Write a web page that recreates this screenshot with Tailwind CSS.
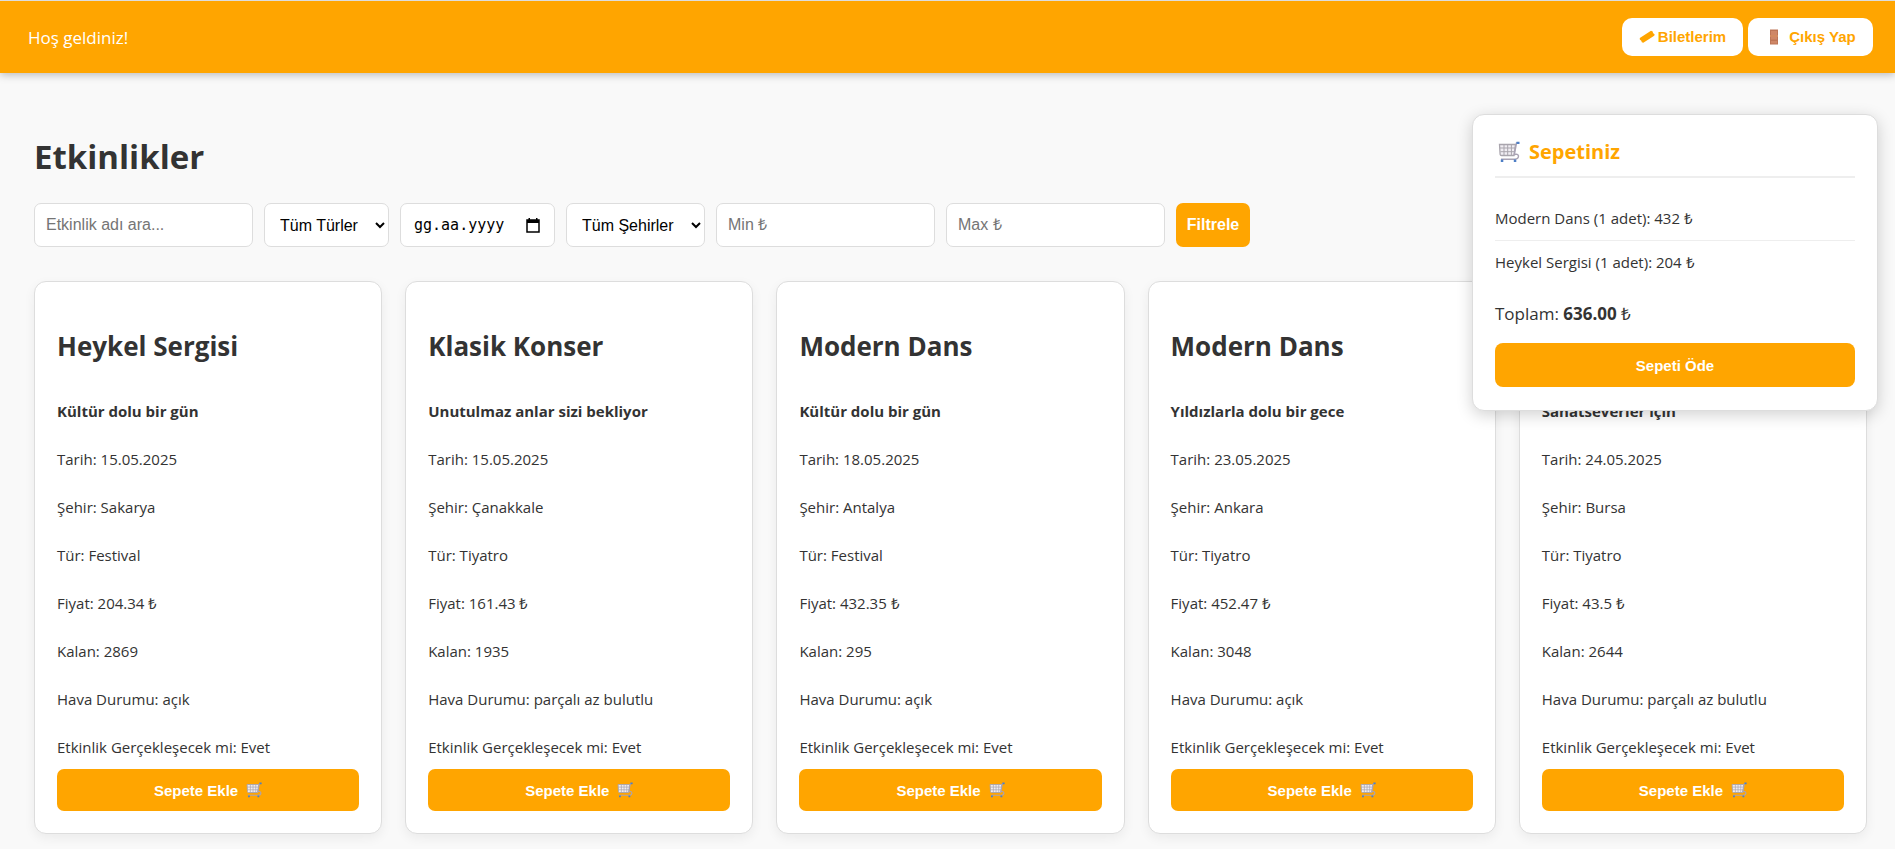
<!DOCTYPE html>
<html lang="tr">
<head>
<meta charset="utf-8">
<title>Etkinlikler</title>
<script src="https://cdn.jsdelivr.net/npm/@tailwindcss/browser@4"></script>
</head>
<body class="min-h-screen bg-[#f9f9f9] font-['Segoe_UI','Open_Sans',sans-serif] text-[15px] leading-[25px] text-[#333]">

<svg class="hidden" aria-hidden="true">
  <symbol id="cart" viewBox="0 0 22 22">
    <path d="M1.500 3.500H17.500L16 14.500H3.500Q2.300 14.500 2.100 13.300Z" fill="#f1eef3" stroke="#a9a5ad" stroke-width="1.300"/>
    <path d="M2 7H17M2.500 10.700H16.500M6 3.500V14.500M9.700 3.500V14.500M13.400 3.500V14.500" stroke="#a9a5ad" stroke-width="1" fill="none"/>
    <path d="M20.500 2H18.500L16.300 13.500Q20 12.500 20.500 15Q20.500 18 17 18.300H3" fill="none" stroke="#aaa3b4" stroke-width="1.400"/>
    <path d="M18.500 .8H21.500V3H18.500ZM2.800 18.500H5.300V21H2.800ZM15.800 18.500H18.300V21H15.800Z" fill="#4d7ec5"/>
  </symbol>
</svg>

<header class="flex items-center justify-between border-t border-[#ddd] bg-[#ffa500] py-[17px] pr-[22px] pl-7 shadow-[0_2px_8px_rgba(0,0,0,0.25)]">
  <span class="text-[17px] text-white">Hoş geldiniz!</span>
  <nav class="flex gap-[5px] font-['Liberation_Sans',Arial,sans-serif] text-[15px] leading-[18px] font-bold text-[#ffa500]">
    <button type="button" class="flex h-[38px] w-[121px] items-center justify-center gap-[3px] rounded-[10px] bg-white">
      <svg class="h-4 w-4" viewBox="0 0 16 16" aria-hidden="true"><path d="M.8 9L12 1.800L13.700 2.500L14 4L15.700 5.500L15.200 6.800L4.300 13.800L2.800 13.200L2.300 11.800L.8 10.500Z" fill="#ffa500"/></svg>
      Biletlerim
    </button>
    <button type="button" class="flex h-[38px] w-[125px] items-center justify-center gap-2 rounded-[10px] bg-white">
      <svg class="h-4 w-4" viewBox="0 0 16 16" aria-hidden="true"><path d="M5 .5H13V15.500H5Z" fill="#bd7556"/><path d="M6 2H12V6H6ZM6 8H12V10.500H6ZM6 12H12V14.500H6Z" fill="#cf8767"/><path d="M5 7H13" stroke="#e9a06a"/></svg>
      Çıkış Yap
    </button>
  </nav>
</header>

<main class="pt-[60px] pr-7 pb-[13px] pl-[34px]">
  <h1 class="mb-[22px] text-[33px] leading-[48px] font-bold">Etkinlikler</h1>

  <form class="mb-[34px] flex flex-wrap gap-[11px] font-['Liberation_Sans',Arial,sans-serif] text-base leading-5 text-black">
    <input type="text" aria-label="Etkinlik adı" placeholder="Etkinlik adı ara..." class="h-11 w-[219px] rounded-[7px] border border-[#ddd] bg-white px-[11px] placeholder:text-[#757575]">
    <select aria-label="Tür" class="h-11 w-[125px] rounded-[7px] border border-[#ddd] bg-white px-[11px]"><option>Tüm Türler</option></select>
    <div class="flex h-11 w-[155px] items-center justify-between rounded-[7px] border border-[#ddd] bg-white pr-[14px] pl-[13px]">
      <input type="text" aria-label="Tarih" value="gg.aa.yyyy" class="w-[100px] font-['DejaVu_Sans_Mono',monospace] text-[15px]">
      <button type="button" aria-label="Tarih seç">
        <svg class="h-[15px] w-[14px]" viewBox="0 0 14 15" aria-hidden="true"><path d="M1 2H13V14H1Z" fill="none" stroke="#000" stroke-width="1.500"/><path d="M1 2H13V5H1ZM2.500 0H4V2H2.500ZM10 0H11.500V2H10Z"/></svg>
      </button>
    </div>
    <select aria-label="Şehir" class="h-11 w-[139px] rounded-[7px] border border-[#ddd] bg-white px-[11px]"><option>Tüm Şehirler</option></select>
    <input type="text" aria-label="En düşük fiyat" placeholder="Min ₺" class="h-11 w-[219px] rounded-[7px] border border-[#ddd] bg-white px-[11px] placeholder:text-[#757575]">
    <input type="text" aria-label="En yüksek fiyat" placeholder="Max ₺" class="h-11 w-[219px] rounded-[7px] border border-[#ddd] bg-white px-[11px] placeholder:text-[#757575]">
    <button type="submit" class="h-11 w-[74px] rounded-[7px] bg-[#ffa500] font-bold text-white">Filtrele</button>
  </form>

  <section id="events" class="grid grid-cols-5 gap-[23px]"></section>
</main>

<template id="card">
  <article class="rounded-xl border border-[#ddd] bg-white px-[22px] pt-[43px] pb-[22px] shadow-[0_4px_12px_rgba(0,0,0,0.06)]">
    <h2 class="mb-8 text-[26px] leading-[42px] font-bold"></h2>
    <div class="mb-[9px] flex flex-col gap-[23px]"></div>
    <button type="button" class="flex h-[42px] w-full items-center justify-center gap-2 rounded-[7px] bg-[#ffa500] font-['Liberation_Sans',Arial,sans-serif] text-[15px] font-bold text-white">Sepete Ekle <svg class="h-4 w-4" aria-hidden="true"><use href="#cart"/></svg></button>
  </article>
</template>

<aside class="absolute top-[114px] right-[17px] w-[406px] rounded-xl border border-[#ddd] bg-white px-[22px] pt-[22px] pb-[23px] shadow-[0_4px_16px_rgba(0,0,0,0.18)]">
  <h2 class="flex items-center gap-[9px] border-b-2 border-[#eee] pb-[9px] pl-[3px] text-xl leading-[30px] font-bold text-[#ffa500]"><svg class="h-[22px] w-[22px]" aria-hidden="true"><use href="#cart"/></svg>Sepetiniz</h2>
  <ul class="mt-[19px]">
    <li class="border-b border-[#eee] py-[9px]">Modern Dans (1 adet): 432 ₺</li>
    <li class="py-[9px]">Heykel Sergisi (1 adet): 204 ₺</li>
  </ul>
  <p class="mt-4 mb-[15px] text-[17px] leading-7">Toplam: <strong>636.00</strong> ₺</p>
  <button type="button" class="h-11 w-full rounded-lg bg-[#ffa500] font-['Liberation_Sans',Arial,sans-serif] text-[15px] font-bold text-white">Sepeti Öde</button>
</aside>

<script>
const events = [
  ["Heykel Sergisi", "Kültür dolu bir gün", "15.05.2025", "Sakarya", "Festival", "204.34", "2869", "açık"],
  ["Klasik Konser", "Unutulmaz anlar sizi bekliyor", "15.05.2025", "Çanakkale", "Tiyatro", "161.43", "1935", "parçalı az bulutlu"],
  ["Modern Dans", "Kültür dolu bir gün", "18.05.2025", "Antalya", "Festival", "432.35", "295", "açık"],
  ["Modern Dans", "Yıldızlarla dolu bir gece", "23.05.2025", "Ankara", "Tiyatro", "452.47", "3048", "açık"],
  ["\u00a0", "Sanatseverler için", "24.05.2025", "Bursa", "Tiyatro", "43.5", "2644", "parçalı az bulutlu"]
];
for (const [title, desc, date, city, type, price, left, weather] of events) {
  const card = document.getElementById("card").content.cloneNode(true);
  card.querySelector("h2").textContent = title;
  card.querySelector("div").innerHTML =
    `<p><strong>${desc}</strong></p><p>Tarih: ${date}</p><p>Şehir: ${city}</p><p>Tür: ${type}</p><p>Fiyat: ${price} ₺</p><p>Kalan: ${left}</p><p>Hava Durumu: ${weather}</p><p>Etkinlik Gerçekleşecek mi: Evet</p>`;
  document.getElementById("events").append(card);
}
</script>
</body>
</html>
